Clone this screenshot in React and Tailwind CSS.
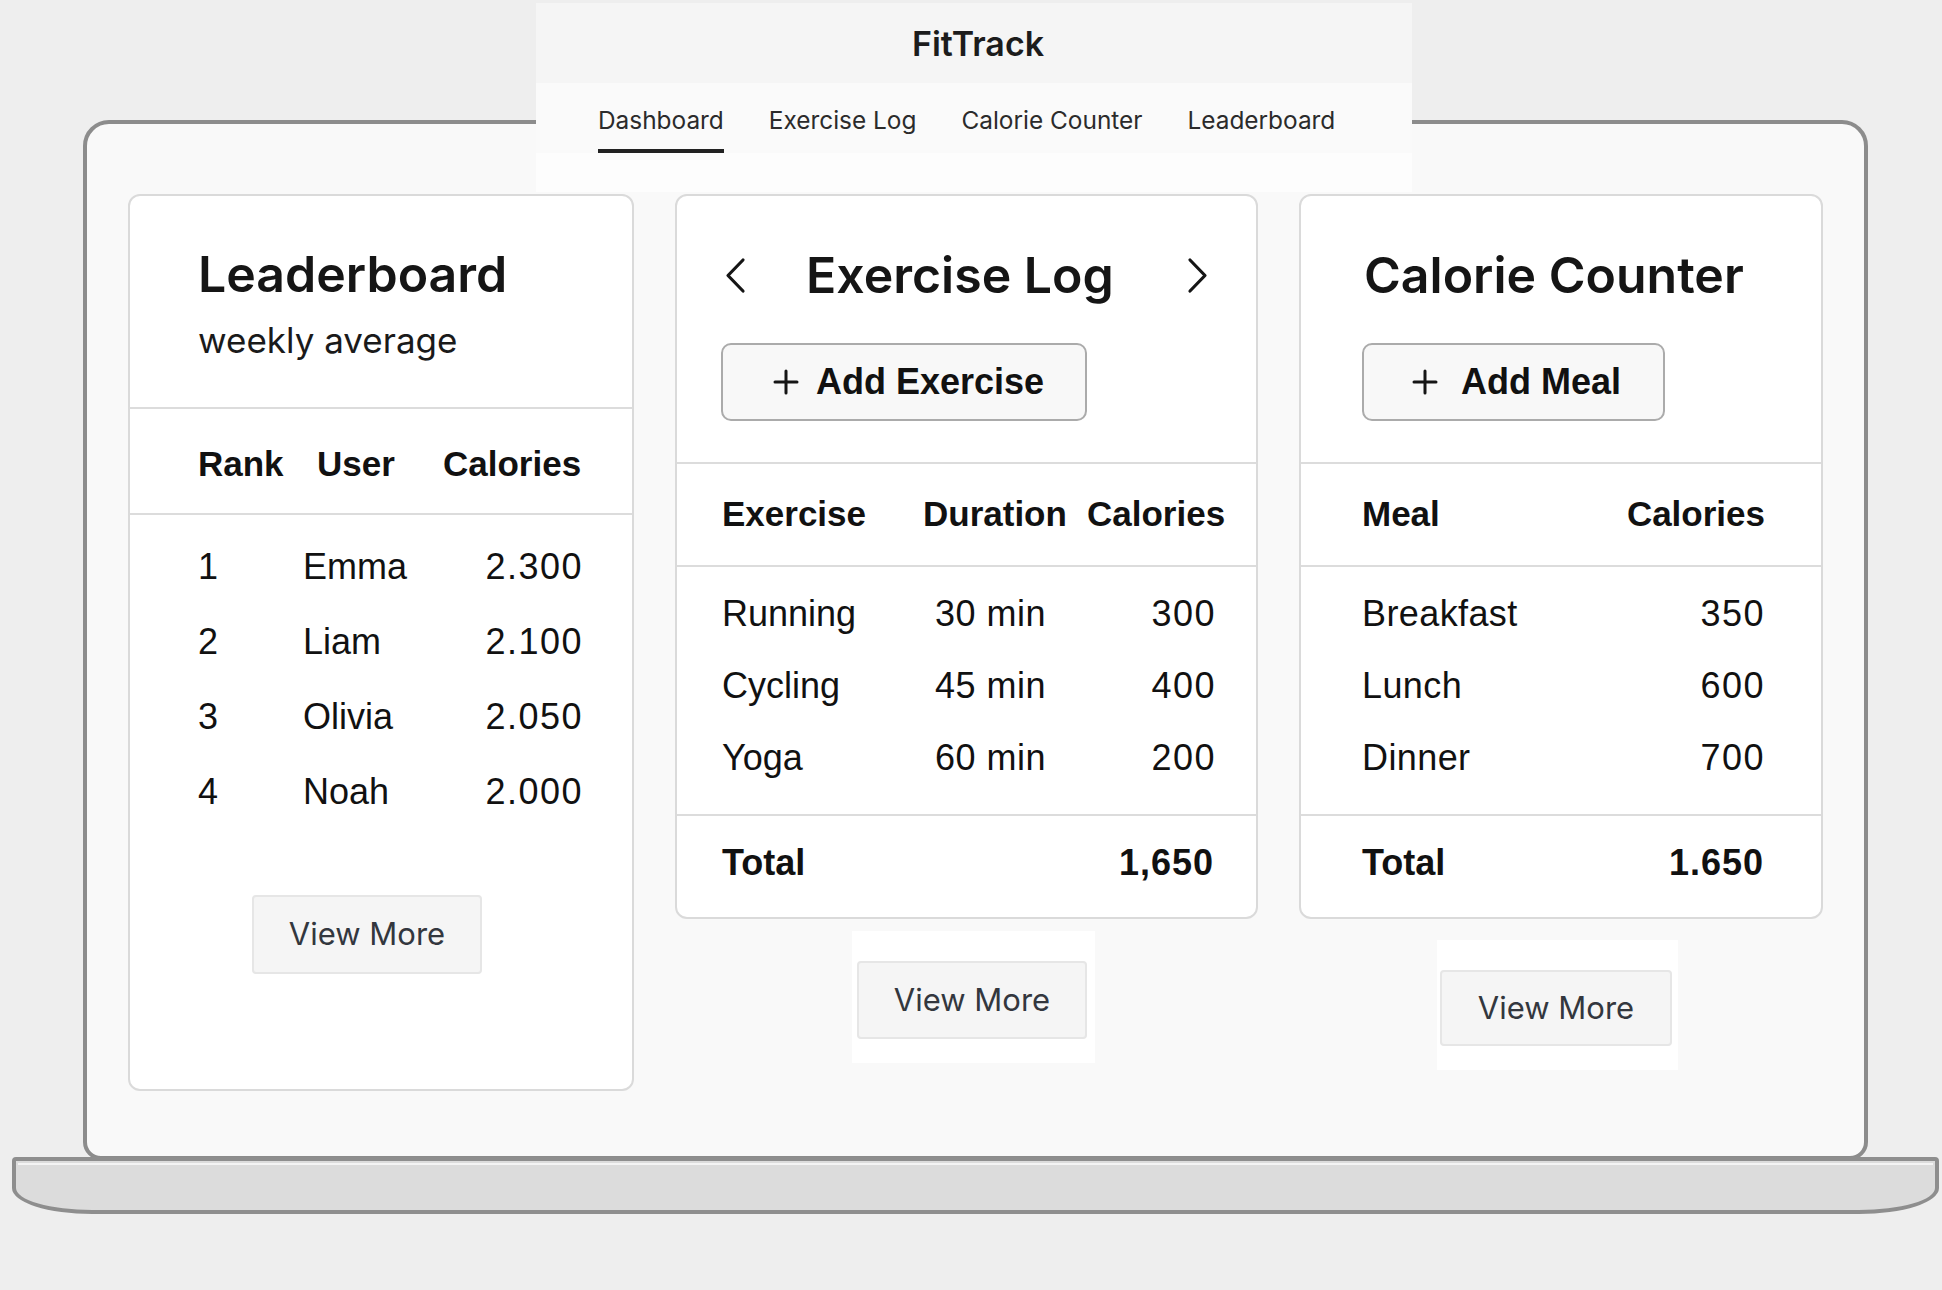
import React from "react";

const body = { fontFamily: '"Liberation Sans", Arial, sans-serif' };
const ui = { fontFamily: 'Inter, "Liberation Sans", sans-serif' };

function ChevronLeft() {
  return (
    <svg width="22" height="37" viewBox="0 0 22 37" fill="none">
      <polyline points="19,3 4,18.5 19,34" stroke="#151515" strokeWidth="3.2" strokeLinecap="round" strokeLinejoin="round" />
    </svg>
  );
}

function ChevronRight() {
  return (
    <svg width="22" height="37" viewBox="0 0 22 37" fill="none">
      <polyline points="3,3 18,18.5 3,34" stroke="#151515" strokeWidth="3.2" strokeLinecap="round" strokeLinejoin="round" />
    </svg>
  );
}

function PlusIcon() {
  return (
    <svg width="26" height="26" viewBox="0 0 26 26" fill="none">
      <path d="M13 2v22M2 13h22" stroke="#151515" strokeWidth="3" strokeLinecap="round" />
    </svg>
  );
}

function ViewMore({ className }) {
  return (
    <button
      className={`flex items-center justify-center rounded-[4px] border-2 border-[#e6e6e6] bg-[#f5f5f5] text-[31px] text-[#33373e] ${className}`}
      style={ui}
    >
      View More
    </button>
  );
}

function Leaderboard() {
  const rows = [
    ["1", "Emma", "2.300"],
    ["2", "Liam", "2.100"],
    ["3", "Olivia", "2.050"],
    ["4", "Noah", "2.000"],
  ];
  return (
    <div className="w-[506px] rounded-[12px] border-2 border-[#dadada] bg-white pb-[115px]">
      <div className="h-[211px] pl-[68px] pt-[48px]">
        <h2 className="text-[50px] leading-[60px] font-semibold text-[#151515]" style={ui}>
          Leaderboard
        </h2>
        <p className="mt-[14px] text-[35px] leading-[44px] text-[#1a1a1a]" style={ui}>
          weekly average
        </p>
      </div>
      <div className="flex h-[106px] items-center border-t-2 border-[#dcdcdc] pl-[68px] pt-[6px] text-[35px] font-bold text-[#111]">
        <span className="w-[119px]">Rank</span>
        <span className="w-[126px]">User</span>
        <span>Calories</span>
      </div>
      <div className="border-t-2 border-[#dcdcdc] pt-[14px] text-[36px] text-[#111]">
        {rows.map(([rank, name, cal]) => (
          <div key={rank} className="flex h-[75px] items-center pl-[68px]">
            <span className="w-[105px]">{rank}</span>
            <span className="w-[180px]">{name}</span>
            <span className="w-[100px] text-right tracking-[1.5px]">{cal}</span>
          </div>
        ))}
      </div>
      <ViewMore className="ml-[122px] mt-[66px] h-[79px] w-[230px]" />
    </div>
  );
}

function ExerciseLog() {
  const rows = [
    ["Running", "30 min", "300"],
    ["Cycling", "45 min", "400"],
    ["Yoga", "60 min", "200"],
  ];
  return (
    <div className="flex flex-col items-start">
      <div className="w-[583px] rounded-[12px] border-2 border-[#dadada] bg-white">
        <div className="h-[266px] pl-[47px] pt-[51px]">
          <div className="flex h-[56px] items-center pr-[47px]">
            <ChevronLeft />
            <h2 className="ml-[60px] text-[50px] leading-[56px] font-semibold text-[#151515]" style={ui}>
              Exercise Log
            </h2>
            <span className="ml-auto">
              <ChevronRight />
            </span>
          </div>
          <button className="-ml-[3px] mt-[40px] flex h-[78px] w-[366px] items-center rounded-[10px] border-2 border-[#ababab] bg-[#f8f8f8] pl-[50px] text-[36px] font-bold text-[#111]">
            <PlusIcon />
            <span className="ml-[17px]">Add Exercise</span>
          </button>
        </div>
        <div className="flex h-[103px] items-center border-t-2 border-[#dcdcdc] pl-[45px] text-[35px] font-bold text-[#111]">
          <span className="w-[201px]">Exercise</span>
          <span className="w-[164px]">Duration</span>
          <span>Calories</span>
        </div>
        <div className="border-t-2 border-[#dcdcdc] pb-[20px] pt-[11px] text-[36px] text-[#111]">
          {rows.map(([name, dur, cal]) => (
            <div key={name} className="flex h-[72px] items-center pl-[45px]">
              <span className="w-[213px]">{name}</span>
              <span className="w-[120px] tracking-[0.5px]">{dur}</span>
              <span className="w-[161px] text-right tracking-[1.5px]">{cal}</span>
            </div>
          ))}
        </div>
        <div className="flex h-[103px] items-center justify-between border-t-2 border-[#dcdcdc] pb-[7px] pl-[45px] pr-[42px] text-[36px] font-bold text-[#111]">
          <span>Total</span>
          <span className="tracking-[1px]">1,650</span>
        </div>
      </div>
      <div className="ml-[177px] mt-[12px] h-[132px] w-[243px] bg-white pl-[5px] pt-[30px]">
        <ViewMore className="h-[78px] w-[230px]" />
      </div>
    </div>
  );
}

function CalorieCounter() {
  const rows = [
    ["Breakfast", "350"],
    ["Lunch", "600"],
    ["Dinner", "700"],
  ];
  return (
    <div className="flex flex-col items-start">
      <div className="w-[524px] rounded-[12px] border-2 border-[#dadada] bg-white">
        <div className="h-[266px] pl-[63px] pt-[51px]">
          <h2 className="h-[56px] text-[50px] leading-[56px] font-semibold text-[#151515]" style={ui}>
            Calorie Counter
          </h2>
          <button className="-ml-[2px] mt-[40px] flex h-[78px] w-[303px] items-center rounded-[10px] border-2 border-[#ababab] bg-[#f8f8f8] pl-[48px] text-[36px] font-bold text-[#111]">
            <PlusIcon />
            <span className="ml-[23px]">Add Meal</span>
          </button>
        </div>
        <div className="flex h-[103px] items-center justify-between border-t-2 border-[#dcdcdc] pl-[61px] pr-[56px] text-[35px] font-bold text-[#111]">
          <span>Meal</span>
          <span>Calories</span>
        </div>
        <div className="border-t-2 border-[#dcdcdc] pb-[20px] pt-[11px] text-[36px] text-[#111]">
          {rows.map(([name, cal]) => (
            <div key={name} className="flex h-[72px] items-center justify-between pl-[61px] pr-[56px]">
              <span className="tracking-[0.4px]">{name}</span>
              <span className="tracking-[1.5px]">{cal}</span>
            </div>
          ))}
        </div>
        <div className="flex h-[103px] items-center justify-between border-t-2 border-[#dcdcdc] pb-[7px] pl-[61px] pr-[57px] text-[36px] font-bold text-[#111]">
          <span>Total</span>
          <span className="tracking-[1px]">1.650</span>
        </div>
      </div>
      <div className="ml-[138px] mt-[21px] h-[130px] w-[241px] bg-white pl-[3px] pt-[30px]">
        <ViewMore className="h-[76px] w-[232px]" />
      </div>
    </div>
  );
}

function Header() {
  const tabs = ["Dashboard", "Exercise Log", "Calorie Counter", "Leaderboard"];
  return (
    <div className="absolute left-[536px] top-[3px] w-[876px]" style={ui}>
      <div className="flex h-[80px] items-center justify-center bg-[#f5f5f5] pl-[8px]">
        <span className="text-[34px] font-semibold text-[#1c1c1c]">FitTrack</span>
      </div>
      <div className="flex h-[70px] gap-[45px] bg-[#fafafa] pl-[62px] pt-[22px]">
        {tabs.map((t, i) => (
          <div key={t} className="flex flex-col">
            <span className="text-[24.4px] leading-[30px] text-[#2b2b2b]">{t}</span>
            {i === 0 && <span className="mt-[14px] h-[4px] w-full bg-[#222]" />}
          </div>
        ))}
      </div>
      <div className="h-[39px] bg-[#fdfdfd]" />
    </div>
  );
}

export default function App() {
  return (
    <div className="relative h-[1290px] w-[1942px] overflow-hidden bg-[#eeeeee] pt-[120px]" style={body}>
      <div className="ml-[83px] h-[1040px] w-[1785px] rounded-t-[26px] rounded-b-[18px] border-4 border-[#8c8c8c] bg-[#f9f9f9] pl-[41px] pt-[70px]">
        <div className="flex items-start gap-[41px]">
          <Leaderboard />
          <ExerciseLog />
          <CalorieCounter />
        </div>
      </div>
      <div className="relative -mt-[3px] ml-[12px] h-[57px] w-[1927px] rounded-t-[4px] rounded-bl-[80px_26px] rounded-br-[80px_26px] border-4 border-[#8e8e8e] bg-[#dcdcdc]">
        <div className="mx-[2px] mt-[2px] h-[2px] bg-[#f4f4f4]" />
      </div>
      <Header />
    </div>
  );
}
